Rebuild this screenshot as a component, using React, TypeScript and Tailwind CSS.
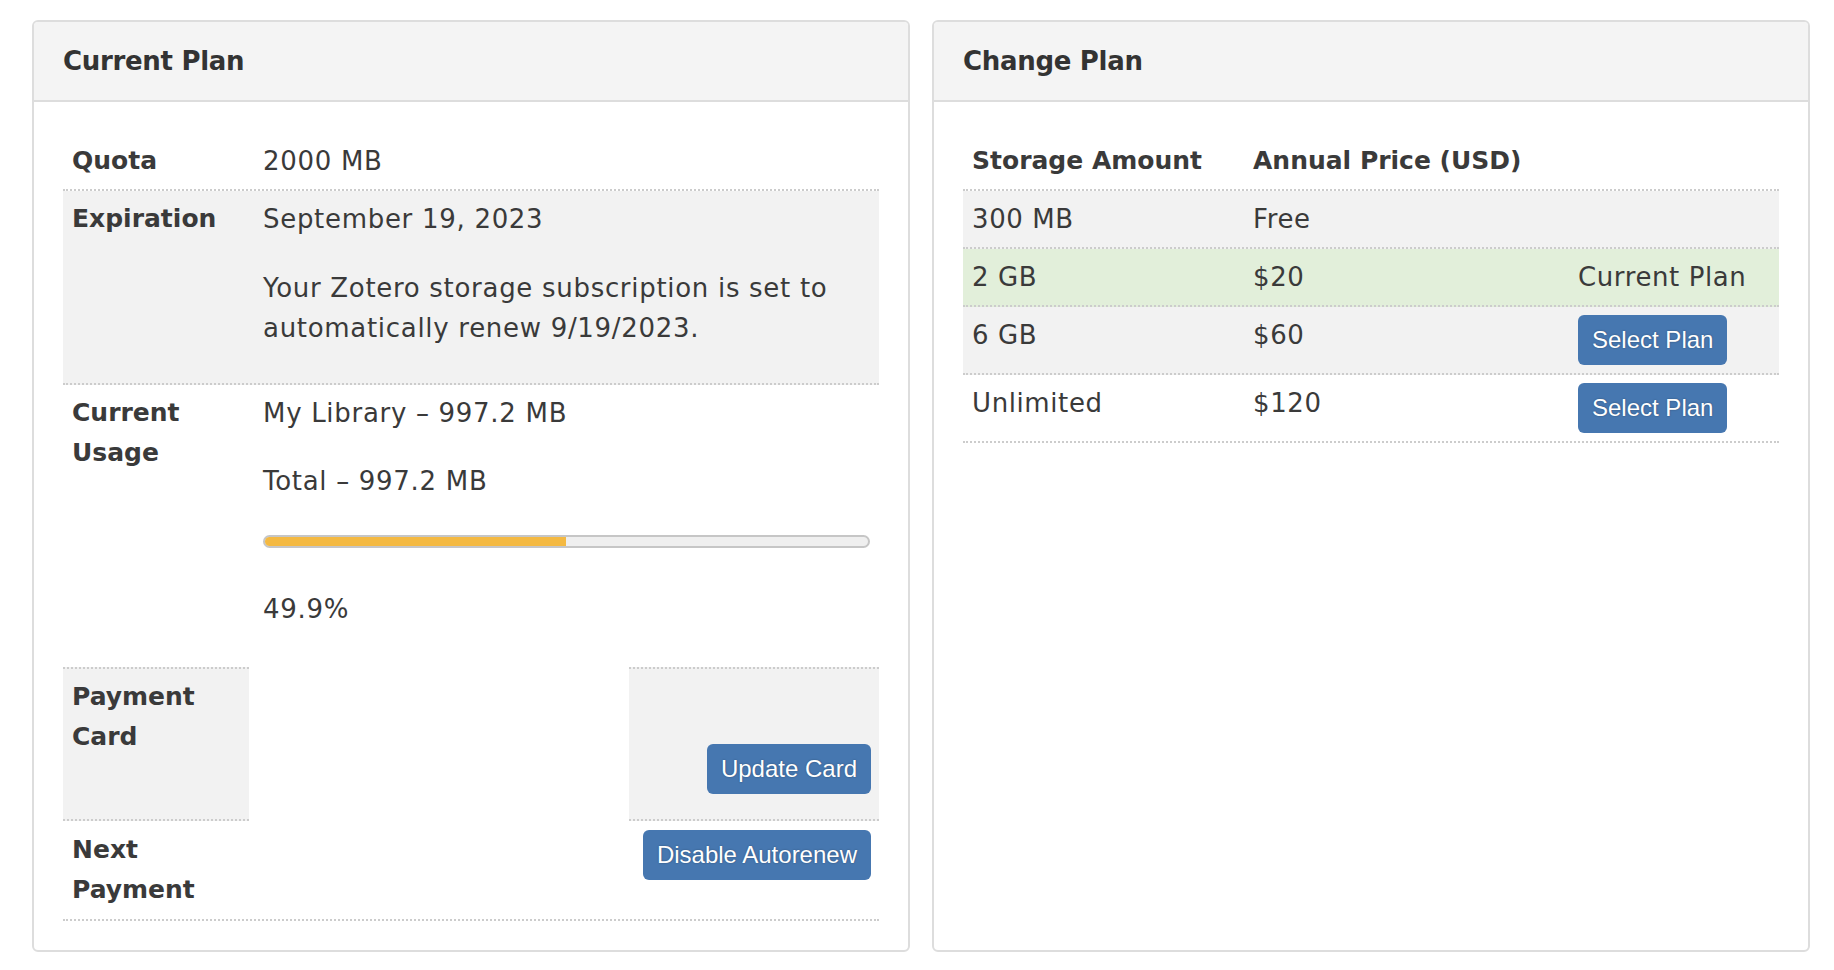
const sans = "font-['DejaVu_Sans','Noto_Sans',sans-serif]"
const btn =
  "inline-block rounded-[6px] bg-[#4677b0] px-[14px] py-[7px] font-['Liberation_Sans',Arial,sans-serif] text-[24px] leading-[36px] tracking-normal text-white [text-shadow:0_0_2px_rgba(0,0,0,0.35)]"
const label = "text-[25px] font-bold tracking-[0px] text-[#3a3a3a]"
const dot = "border-dotted border-[#cccccc]"

function Panel({ title, children }: { title: string; children: React.ReactNode }) {
  return (
    <div className="flex flex-col overflow-hidden rounded-[6px] border-2 border-[#dddddd] bg-white">
      <div className="flex h-[80px] items-center border-b-2 border-[#dddddd] bg-[#f4f4f4] px-[29px]">
        <h2 className="text-[26px] font-bold tracking-[-0.3px] text-[#333333]">{title}</h2>
      </div>
      <div className="flex-1 px-[29px] pt-[30px] pb-[29px]">{children}</div>
    </div>
  )
}

function CurrentPlan() {
  return (
    <Panel title="Current Plan">
      <div className="text-[26px] leading-[40px] tracking-[0.7px] text-[#3a3a3a]">
        {/* quota */}
        <div className={`flex border-b-2 ${dot}`}>
          <div className={`w-[186px] shrink-0 pt-[9px] pb-2 pl-[9px] ${label}`}>Quota</div>
          <div className="flex-1 pt-[9px] pb-2 pl-[14px] pr-[9px]">2000 MB</div>
        </div>

        {/* expiration */}
        <div className={`flex border-b-2 bg-[#f2f2f2] ${dot}`}>
          <div className={`w-[186px] shrink-0 py-2 pl-[9px] ${label}`}>Expiration</div>
          <div className="flex-1 py-2 pl-[14px] pr-[9px]">
            <div>September 19, 2023</div>
            <p className="mt-[29px] mb-[27px]">
              Your Zotero storage subscription is set to
              <br />
              automatically renew 9/19/2023.
            </p>
          </div>
        </div>

        {/* usage */}
        <div className="flex">
          <div className={`w-[186px] shrink-0 py-2 pl-[9px] ${label}`}>
            Current
            <br />
            Usage
          </div>
          <div className="flex-1 pt-2 pb-[38px] pl-[14px] pr-[9px]">
            <div>My Library – 997.2 MB</div>
            <div className="mt-[28px]">Total – 997.2 MB</div>
            <div className="mt-[34px] h-[13px] overflow-hidden rounded-full border-2 border-[#c6c6c6] bg-[#efefef]">
              <div className="h-full bg-[#f4b942]" style={{ width: "49.9%" }} />
            </div>
            <div className="mt-[41px]">49.9%</div>
          </div>
        </div>

        {/* payment card */}
        <div className="flex">
          <div className={`w-[186px] shrink-0 border-y-2 bg-[#f2f2f2] py-2 pl-[9px] ${dot} ${label}`}>
            Payment
            <br />
            Card
          </div>
          <div className="flex-1" />
          <div className={`flex w-[250px] shrink-0 justify-end border-y-2 bg-[#f2f2f2] pt-2 pb-2 pr-[8px] ${dot}`}>
            <div className="pt-[67px] pb-[17px]">
              <button className={btn}>Update Card</button>
            </div>
          </div>
        </div>

        {/* next payment */}
        <div className={`flex border-b-2 ${dot}`}>
          <div className={`w-[186px] shrink-0 pt-[9px] pb-[9px] pl-[9px] ${label}`}>
            Next
            <br />
            Payment
          </div>
          <div className="flex flex-1 items-start justify-end pt-[9px] pr-[8px]">
            <button className={btn}>Disable Autorenew</button>
          </div>
        </div>
      </div>
    </Panel>
  )
}

const plans = [
  { size: "300 MB", price: "Free", action: "none", bg: "bg-[#f2f2f2]" },
  { size: "2 GB", price: "$20", action: "current", bg: "bg-[#e2efda]" },
  { size: "6 GB", price: "$60", action: "select", bg: "bg-[#f2f2f2]" },
  { size: "Unlimited", price: "$120", action: "select", bg: "bg-white" },
]

function ChangePlan() {
  return (
    <Panel title="Change Plan">
      <div className="text-[26px] leading-[40px] tracking-[0.6px] text-[#3a3a3a]">
        <div className={`flex border-b-2 ${dot}`}>
          <div className={`w-[281px] shrink-0 pt-[9px] pb-2 pl-[9px] ${label}`}>Storage Amount</div>
          <div className={`flex-1 pt-[9px] pb-2 pl-[9px] ${label}`}>Annual Price (USD)</div>
        </div>
        {plans.map((p) => (
          <div key={p.size} className={`flex border-b-2 ${dot} ${p.bg}`}>
            <div className="w-[281px] shrink-0 py-2 pl-[9px]">{p.size}</div>
            <div className="w-[325px] shrink-0 py-2 pl-[9px]">{p.price}</div>
            <div className="flex-1 py-2 pl-[9px]">
              {p.action === "current" && <span>Current Plan</span>}
              {p.action === "select" && <button className={btn}>Select Plan</button>}
            </div>
          </div>
        ))}
      </div>
    </Panel>
  )
}

export default function App() {
  return (
    <div className={`min-h-screen bg-white pt-[20px] pl-[32px] ${sans}`}>
      <div className="grid w-[1778px] grid-cols-2 gap-[22px]">
        <CurrentPlan />
        <ChangePlan />
      </div>
    </div>
  )
}
